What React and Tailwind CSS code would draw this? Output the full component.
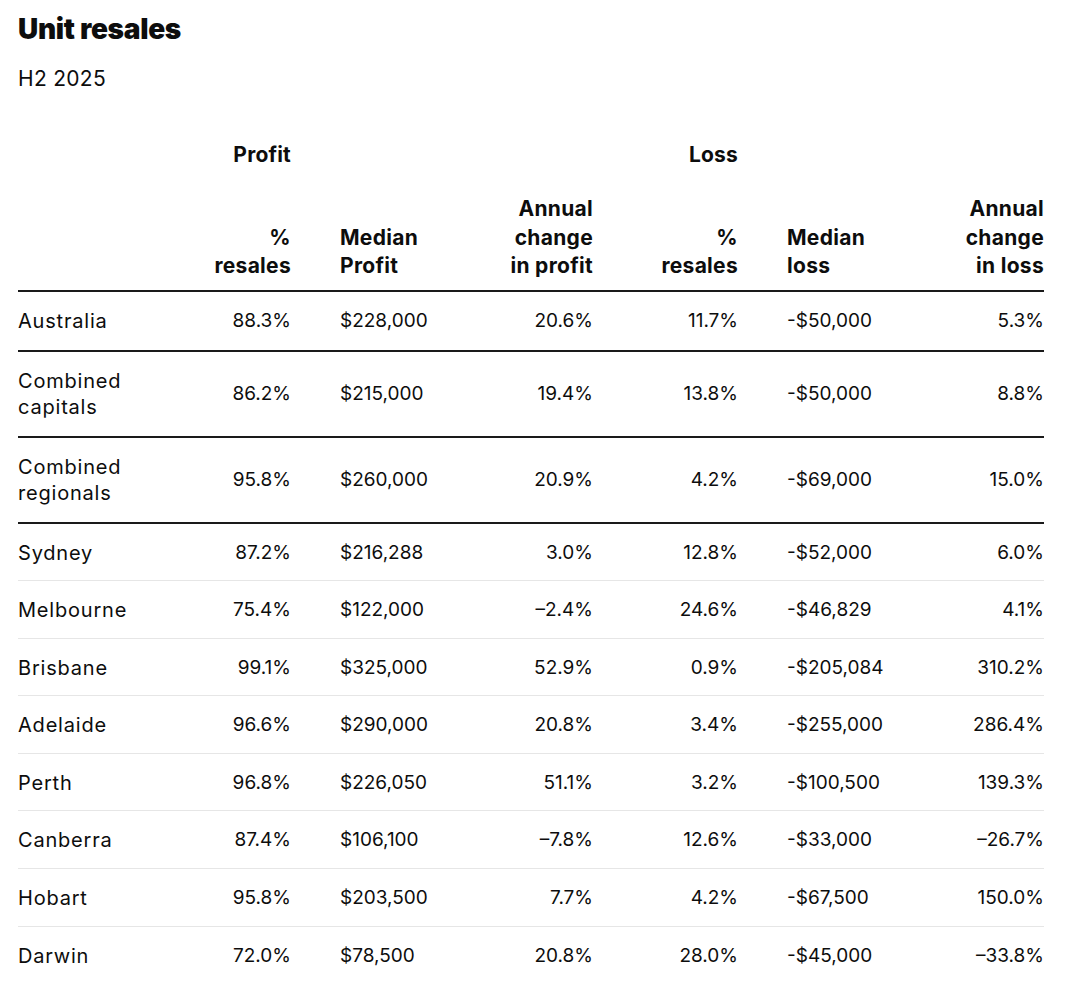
const rows = [
  { name: 'Australia', v: ['88.3%', '$228,000', '20.6%', '11.7%', '-$50,000', '5.3%'], thick: true },
  { name: 'Combined capitals', v: ['86.2%', '$215,000', '19.4%', '13.8%', '-$50,000', '8.8%'], thick: true },
  { name: 'Combined regionals', v: ['95.8%', '$260,000', '20.9%', '4.2%', '-$69,000', '15.0%'], thick: true },
  { name: 'Sydney', v: ['87.2%', '$216,288', '3.0%', '12.8%', '-$52,000', '6.0%'] },
  { name: 'Melbourne', v: ['75.4%', '$122,000', '\u20132.4%', '24.6%', '-$46,829', '4.1%'] },
  { name: 'Brisbane', v: ['99.1%', '$325,000', '52.9%', '0.9%', '-$205,084', '310.2%'] },
  { name: 'Adelaide', v: ['96.6%', '$290,000', '20.8%', '3.4%', '-$255,000', '286.4%'] },
  { name: 'Perth', v: ['96.8%', '$226,050', '51.1%', '3.2%', '-$100,500', '139.3%'] },
  { name: 'Canberra', v: ['87.4%', '$106,100', '\u20137.8%', '12.6%', '-$33,000', '\u201326.7%'] },
  { name: 'Hobart', v: ['95.8%', '$203,500', '7.7%', '4.2%', '-$67,500', '150.0%'] },
  { name: 'Darwin', v: ['72.0%', '$78,500', '20.8%', '28.0%', '-$45,000', '\u201333.8%'] },
];

const grid = 'grid grid-cols-[152px_121px_189px_113px_145px_192px_114px]';
// alignment per value column (after the name column)
const align = ['text-right', 'pl-[49px] text-left', 'text-right', 'text-right', 'pl-[49px] text-left', 'text-right'];

export default function App() {
  return (
    <div className="min-h-screen bg-white px-[18px] pt-[11px] text-[#0d0d0d] font-['Inter',sans-serif]">
      <h1 className="text-[28px] font-black leading-[36px] tracking-[-0.3px]">Unit resales</h1>
      <p className="mt-[18px] text-[21px] leading-[28px] tracking-[0.3px]">H2 2025</p>

      <div className="mt-[48px] w-[1026px]">
        <div className={`${grid} text-[21px] font-bold leading-[28px] tracking-[0.2px]`}>
          <div />
          <div className="text-right">Profit</div>
          <div />
          <div />
          <div className="text-right">Loss</div>
        </div>

        <div className={`${grid} mt-[26px] items-end border-b-2 border-[#1a1a1a] pb-[9px] text-[21px] font-bold leading-[28.5px] tracking-[0.3px]`}>
          <div />
          <div className="text-right">%<br />resales</div>
          <div className="pl-[49px]">Median<br />Profit</div>
          <div className="text-right">Annual<br />change<br />in profit</div>
          <div className="text-right">%<br />resales</div>
          <div className="pl-[49px]">Median<br />loss</div>
          <div className="text-right">Annual<br />change<br />in loss</div>
        </div>

        {rows.map((r, i) => (
          <div
            key={r.name}
            className={`${grid} items-center text-[19px] leading-[26px] ${
              r.thick
                ? 'border-b-2 border-[#1a1a1a] py-4'
                : i === rows.length - 1
                ? 'pt-4 pb-[14.6px]'
                : 'border-b border-[#e6e6e6] pt-4 pb-[14.6px]'
            }`}
          >
            <div className="pr-4 text-[20px] tracking-[0.8px]">{r.name}</div>
            {r.v.map((val, j) => (
              <div key={j} className={align[j]}>{val}</div>
            ))}
          </div>
        ))}
      </div>
    </div>
  );
}
